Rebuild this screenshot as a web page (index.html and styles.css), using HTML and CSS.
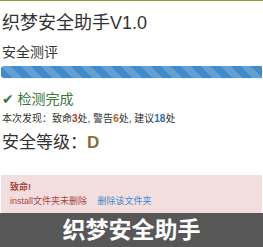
FILE: index.html
```html
<!DOCTYPE html>
<html>
<head>
    <meta charset="utf-8">
    <title>织梦安全助手</title>
    <link rel="stylesheet" href="styles.css">
</head>
<body>
    <div class="topline"></div>
    <div class="container">
        <h1>织梦安全助手V1.0</h1>
        <h3>安全测评</h3>
        <div class="progress">
            <div class="progress-bar" style="width: 100%"></div>
        </div>

        <div class="done"><span class="check">&#10004;</span> 检测完成</div>
        <div class="summary">
            本次发现：致命<b class="fatal">3</b>处, 警告<b class="warn">6</b>处, 建议<b class="info">18</b>处
        </div>
        <div class="level">安全等级：<b>D</b></div>

        <div class="alert">
            <div class="alert-title">致命!</div>
            <div class="alert-row">
                <span>install文件夹未删除</span>
                <a href="#" class="fix">删除该文件夹</a>
            </div>
        </div>
    </div>

    <div class="caption">织梦安全助手</div>
</body>
</html>
```

FILE: styles.css
```css
body {
    margin: 0;
    font-family: "Liberation Sans", "Noto Sans CJK SC", sans-serif;
    color: #333;
    background: #fff;
}
.topline {
    height: 1px;
    background: #8aa23c;
}
.container {
    padding: 0 1px 0 1px;
}
h1 {
    margin: 10px 0 0 1px;
    font-size: 18px;
    font-weight: normal;
    line-height: 24px;
}
h3 {
    margin: 8px 0 0 1px;
    font-size: 14px;
    font-weight: normal;
    line-height: 18px;
}
.progress {
    margin-top: 5px;
    height: 13px;
    background: #eef2f6;
    border-radius: 3px 0 0 3px;
}
.progress-bar {
    height: 12px;
    border-radius: 3px 0 0 3px;
    background-color: #428bca;
    background-image: linear-gradient(45deg, rgba(255,255,255,.18) 25%, transparent 25%, transparent 50%, rgba(255,255,255,.18) 50%, rgba(255,255,255,.18) 75%, transparent 75%, transparent);
    background-size: 20px 20px;
}
.done {
    margin-top: 12px;
    margin-left: 1px;
    font-size: 14px;
    line-height: 16px;
    color: #3c763d;
}
.check {
    font-family: "DejaVu Sans", sans-serif;
    font-size: 14px;
}
.summary {
    margin-top: 6px;
    margin-left: 1px;
    font-size: 10px;
    line-height: 12px;
    color: #333;
}
.fatal { color: #c9302c; }
.warn { color: #b5651d; }
.info { color: #2a6fad; }
.level {
    margin-top: 7px;
    margin-left: 1px;
    font-size: 17px;
    line-height: 22px;
}
.level b {
    color: #8a6d3b;
}
.alert {
    margin-top: 21px;
    background: #f2dede;
    color: #a94442;
    padding: 7px 9px 12px 9px;
    font-size: 9px;
}
.alert-title {
    font-weight: bold;
    line-height: 11px;
}
.alert-row {
    margin-top: 3px;
    line-height: 11px;
}
.fix {
    margin-left: 8px;
    color: #428bca;
    text-decoration: none;
}
.caption {
    position: fixed;
    left: 0;
    right: 0;
    bottom: 0;
    height: 34px;
    background: #575757;
    color: #fff;
    font-size: 23px;
    font-weight: bold;
    line-height: 34px;
    text-align: center;
}
```
